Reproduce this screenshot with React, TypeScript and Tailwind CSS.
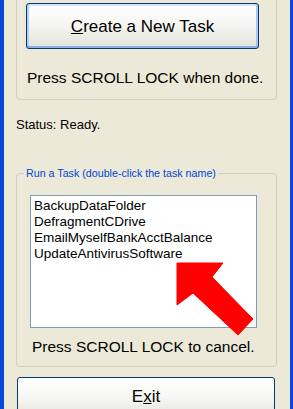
export default function App() {
  const tasks = ['BackupDataFolder', 'DefragmentCDrive', 'EmailMyselfBankAcctBalance', 'UpdateAntivirusSoftware']

  return (
    <div className="relative w-[293px] h-[409px] overflow-hidden flex bg-[#ece9d8] font-['Liberation_Sans',Arial,sans-serif] text-black">
      <div className="w-[4px] bg-[#0a46d8] shrink-0" />

      <div className="flex-1 flex flex-col">
        {/* top group, its upper edge is scrolled away */}
        <div className="ml-[12px] w-[261px] h-[110px] -mt-[10px] shrink-0 border border-[#d0d0bf] rounded-[4px] pt-[12px] pl-[9px]">
          <button className="w-[233px] h-[46px] border border-[#003c74] rounded-[3px] bg-gradient-to-b from-white via-[#f5f5f2] to-[#e3e2da] shadow-[inset_0_-2px_0_#8fb1e8,inset_2px_0_0_#b6cdf5,inset_-2px_0_0_#a9c5f3,inset_0_2px_0_#d4e3fc] text-[17px] leading-[20px] pt-[1px]">
            <span className="underline">C</span>reate a New Task
          </button>
          <div className="mt-[21px] ml-[1px] text-[15.5px] leading-[16px]">Press SCROLL LOCK when done.</div>
        </div>

        <div className="ml-[12px] mt-[17px] text-[13px] leading-[16px]">Status: Ready.</div>

        {/* run group */}
        <div className="relative ml-[12px] mt-[40px] w-[261px] h-[194px] shrink-0 border border-[#d0d0bf] rounded-[4px]">
          <div className="absolute left-[7px] -top-[8px] px-[2px] bg-[#ece9d8] text-[10.7px] leading-[14px] text-[#0046d5]">
            Run a Task (double-click the task name)
          </div>
          <div className="ml-[13px] mt-[21px] w-[227px] h-[133px] border border-[#7f9db9] bg-white pt-[2px] pl-[3px]">
            {tasks.map((t) => (
              <div key={t} className="text-[13.5px] leading-[16px]">{t}</div>
            ))}
          </div>
          <div className="mt-[11px] ml-[15px] text-[15.5px] leading-[16px]">Press SCROLL LOCK to cancel.</div>
        </div>

        <button className="ml-[13px] mt-[10px] w-[258px] h-[40px] shrink-0 border border-[#003c74] rounded-[3px] bg-gradient-to-b from-white via-[#f7f7f4] to-[#e6e5de] text-[17px] leading-[20px] pt-[0px]">
          E<span className="underline">x</span>it
        </button>
      </div>

      <div className="w-[3px] bg-[#0a46d8] shrink-0" />

      {/* red pointer drawn over the list */}
      <svg className="absolute left-0 top-0 pointer-events-none" width="293" height="409" viewBox="0 0 293 409">
        <polygon points="177,263 223,263 212,277 253,319 238,335 193,293 177,305" fill="#ff0000" strokeLinejoin="round" stroke="#ff0000" strokeWidth="1" />
      </svg>
    </div>
  )
}
